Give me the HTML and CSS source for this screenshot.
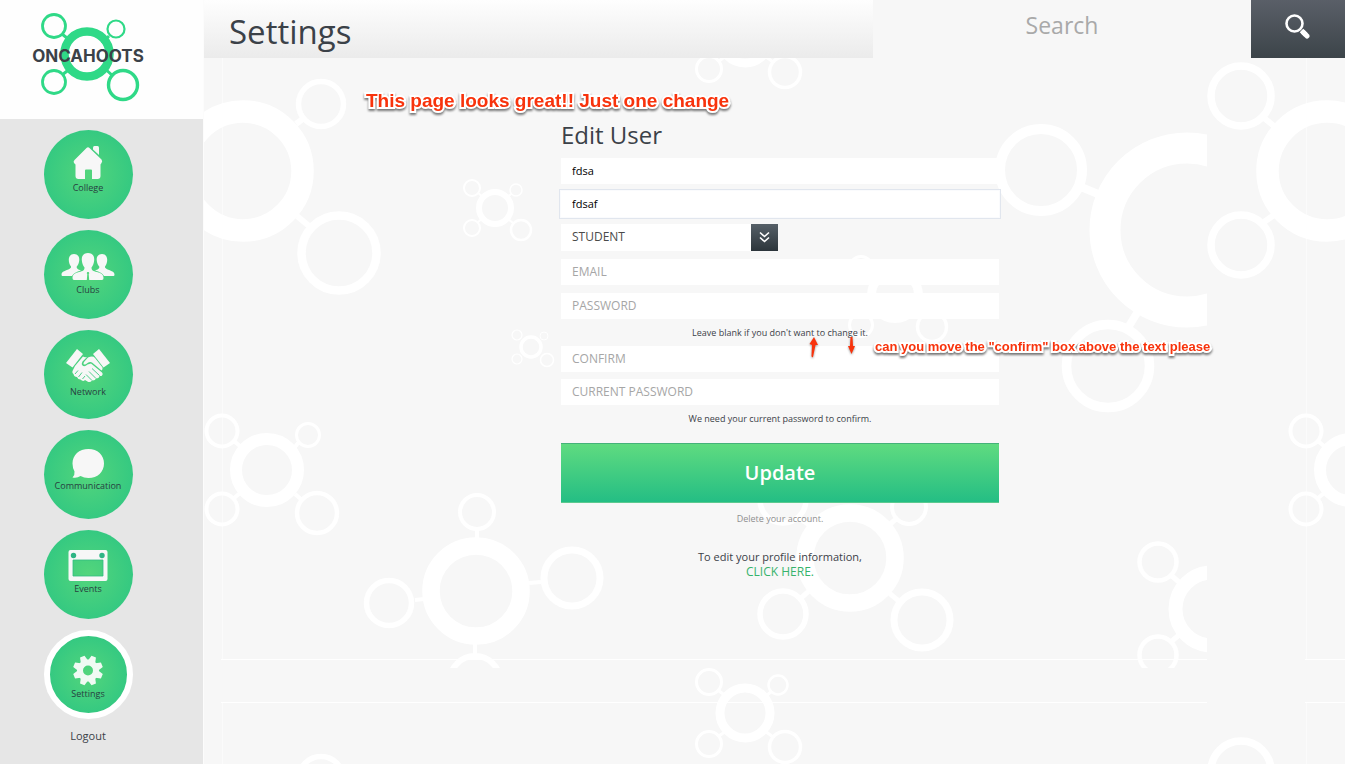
FILE: index.html
```html
<!DOCTYPE html>
<html lang="en">
<head>
<meta charset="utf-8">
<title>Oncahoots - Settings</title>
<link rel="stylesheet" href="styles.css">
</head>
<body>
<aside class="sidebar">
  <a class="logo" href="#">
    <svg width="116" height="92" viewBox="30 11 116 92" role="img" aria-label="Oncahoots">
      <g fill="none" stroke="#2fd987">
        <path stroke-width="3" d="M62 34L72 42M109 36L102 43M62 75L71 68M103 67L113 76"/>
        <circle cx="87" cy="54" r="22.500" stroke-width="8.500"/>
        <circle cx="54" cy="26" r="11.500" stroke-width="2.800"/>
        <circle cx="116" cy="29" r="8.500" stroke-width="2.200"/>
        <circle cx="54" cy="82" r="11.500" stroke-width="2.800"/>
        <circle cx="123" cy="85" r="14.500" stroke-width="3.400"/>
      </g>
      <text class="logo-text" x="88" y="62" text-anchor="middle">ONCAHOOTS</text>
    </svg>
  </a>
  <nav class="nav">
    <a class="nav-item" href="#">
      <svg width="30" height="36" viewBox="0 0 30 36" fill="#f7f7f7"><path d="M20 1.500Q20 0 21.500 0H24.500Q26 0 26 1.500V9L20 3.500Z"/><path d="M13.500 2Q15 .5 16.500 2L28.500 13.500Q29.800 15 28.500 17L27.500 18.500V30Q27.500 33 24.500 33H19V24.500Q19 23.500 18 23.500H13Q12 23.500 12 24.500V33H5.500Q2.500 33 2.500 30V18.500L1 17Q0 15.500 1.500 14Z"/></svg>
      <span>College</span>
    </a>
    <a class="nav-item" href="#">
      <svg width="54" height="38" viewBox="0 0 54 38" fill="#f7f7f7">
        <path d="M13 8C16.500 8 18.500 10.500 18.300 14C18.100 17 17 19 15.500 21C16 23.500 18.500 24 20 24.500Q13 26 11 30H1.500Q.5 30 .5 28.500C.5 25 6.500 24.500 9 22.500Q10.500 21.500 10 20.500C8.500 18.500 7.700 16 7.800 13.500C7.900 10.500 9.500 8 13 8Z"/>
        <path d="M41 8C37.500 8 35.500 10.500 35.700 14C35.900 17 37 19 38.500 21C38 23.500 35.500 24 34 24.500Q41 26 43 30H52.500Q53.500 30 53.500 28.500C53.500 25 47.500 24.500 45 22.500Q43.500 21.500 44 20.500C45.500 18.500 46.300 16 46.200 13.500C46.100 10.500 44.500 8 41 8Z"/>
        <path d="M27 7C31 7 33.500 9.500 33.200 14C33 17 32 19.500 30.500 21.500C30.500 24.500 32 25 36 26C40 27 42.500 28.500 42.500 32Q42.500 34 41 34H28.200L27.700 28L28.300 27.300L27.700 26H26.300L25.700 27.300L26.300 28L25.800 34H13Q11.500 34 11.500 32C11.500 28.500 14 27 18 26C22 25 23.500 24.500 23.500 21.500C22 19.500 21 17 20.800 14C20.500 9.500 23 7 27 7Z"/>
      </svg>
      <span>Clubs</span>
    </a>
    <a class="nav-item" href="#">
      <svg width="46" height="40" viewBox="0 0 46 40" fill="#f7f7f7">
        <path d="M12 3L18 8L7.500 21.500L1 17Z"/><path d="M34 3L28 8L38.500 21.500L45 17Z"/>
        <path d="M18 10.500Q19.500 11.500 22 11L17.500 15.500Q16 18 17.500 19.500Q19.500 21.500 22.500 18.500L26 17.500L37 26.500Q38.500 28 37 29.500Q36 30.500 34.500 29.500Q34.500 32.500 31 32.500Q30 35 27 34.500Q25 37 22.500 35.500L20 34Q18 36 15.500 33.500Q13 33.500 12 31Q9 31 8.500 28Q6.500 26.500 8 24L10 20Z"/>
        <path d="M23 11.500Q28 9.500 30 12L37.500 21.500Q38 23.500 36.500 24.500L27 16.500Q25 15.500 22.500 17Q20.500 19 18.800 18.500Q18 17.500 19 16Z"/>
        <path d="M27 22.500L34.500 29.500M24 25.500L31 32.500M21 28.500L27 34.500M10 28L13 24.500M13.500 31L17 26.500M17.500 33L20 30" stroke="#3bcb80" stroke-width=".9" fill="none"/>
      </svg>
      <span>Network</span>
    </a>
    <a class="nav-item" href="#">
      <svg width="34" height="34" viewBox="0 0 34 34" fill="#f7f7f7"><path d="M17.500 3C26.500 3 33 9 33 17.500C33 26 26.500 32 17.500 32Q13 32 9.500 30Q6 32.500 1.500 31.500Q4 29 3.500 25.500Q1.500 22 1.500 17.500C1.500 9 8 3 17.500 3Z"/></svg>
      <span>Communication</span>
    </a>
    <a class="nav-item" href="#">
      <svg width="40" height="37" viewBox="0 0 40 37"><path fill="#f7f7f7" fill-rule="evenodd" d="M2.500 4H37.500Q39.500 4 39.500 6V33Q39.500 35 37.500 35H2.500Q.5 35 .5 33V6Q.5 4 2.500 4ZM5 14V30H35V14Z"/><path fill="none" stroke="#34bd80" stroke-width=".8" d="M5 14H35V30H5Z"/><circle cx="5.500" cy="9.500" r="2.700" fill="#2fb585"/><circle cx="34" cy="9.500" r="2.700" fill="#2fb585"/></svg>
      <span>Events</span>
    </a>
    <a class="nav-item nav-item--current" href="#" aria-current="page">
      <svg width="32" height="42" viewBox="0 0 32 42">
        <g transform="translate(16 24.500)">
          <circle r="8" fill="none" stroke="#f0faf3" stroke-width="6"/>
          <g fill="#f0faf3" transform="rotate(22.500)">
            <path id="teeth" d="M-3.800 -9.500L-2.400 -15H2.400L3.800 -9.500ZM-3.800 9.500L-2.400 15H2.400L3.800 9.500Z"/>
            <use href="#teeth" transform="rotate(45)"/><use href="#teeth" transform="rotate(90)"/><use href="#teeth" transform="rotate(135)"/>
          </g>
        </g>
      </svg>
      <span>Settings</span>
    </a>
    <a class="logout" href="#">Logout</a>
  </nav>
</aside>

<div class="main">
  <svg class="pattern" viewBox="204 0 1141 764" preserveAspectRatio="xMinYMin slice" aria-hidden="true">
    <defs>
      <clipPath id="tile"><path d="M204 0H1207V668H204Z"/></clipPath>
      <g id="trio">
        <path stroke-width="3" d="M719 691L726 696M772 691L766 696M719 736L726 731M765 731L773 737"/>
        <circle cx="745" cy="713" r="25" stroke-width="9"/>
        <circle cx="709" cy="682" r="12.500" stroke-width="3"/>
        <circle cx="778" cy="685" r="9.500" stroke-width="2.500"/>
        <circle cx="709" cy="744" r="12.500" stroke-width="3"/>
        <circle cx="785" cy="747" r="15.500" stroke-width="3.500"/>
      </g>
      <g id="medium">
        <path stroke-width="4" d="M234 441L241 447M299 442L294 448M233 499L240 493M295 494L303 501"/>
        <circle cx="267" cy="470" r="31" stroke-width="12"/>
        <circle cx="222" cy="431" r="15.500" stroke-width="4"/>
        <circle cx="308" cy="435" r="11.500" stroke-width="3"/>
        <circle cx="222" cy="509" r="15.500" stroke-width="4"/>
        <circle cx="317" cy="513" r="20" stroke-width="4.500"/>
      </g>
    </defs>
    <g fill="none" stroke="#fff">
      <path d="M221 659.500H1207M221 702.500H1207M1305 659.500H1345M1305 702.500H1345"/>
      <path stroke="#fbfbfb" d="M222.500 58V659M222.500 703V764M1306.500 58V659M1306.500 703V764"/>
      <path stroke-width="6" d="M296 124L304 118M297 216L309 226"/>
      <circle cx="243" cy="171" r="59.500" stroke-width="22.500"/>
      <circle cx="321" cy="104" r="22.500" stroke-width="5.500"/>
      <circle cx="321" cy="779" r="22.500" stroke-width="5.500"/>
      <circle cx="339" cy="253" r="37.500" stroke-width="8.500"/>

      <path stroke-width="2" d="M478 193L483 197M511 194L507 198M478 222L483 218M507 218L513 223"/>
      <circle cx="495" cy="208" r="16" stroke-width="6"/>
      <circle cx="472" cy="188" r="8" stroke-width="2"/>
      <circle cx="516" cy="190" r="6" stroke-width="1.500"/>
      <circle cx="472" cy="228" r="8" stroke-width="2"/>
      <circle cx="521" cy="230" r="10" stroke-width="2.500"/>

      <circle cx="531" cy="347" r="10" stroke-width="3.500"/>
      <circle cx="517" cy="335" r="5" stroke-width="1.200"/>
      <circle cx="544" cy="336" r="4" stroke-width="1"/>
      <circle cx="517" cy="359" r="5" stroke-width="1.200"/>
      <circle cx="547" cy="360" r="6.500" stroke-width="1.500"/>

      <use href="#medium"/><use href="#medium" x="1084"/>
      <use href="#trio"/><use href="#trio" y="-675"/>

      <g clip-path="url(#tile)">
        <path stroke-width="4" d="M477 530V540M415 600L424 599M529 583L541 582M475 644V655"/>
        <circle cx="476" cy="591" r="45" stroke-width="17.500"/>
        <circle cx="477" cy="512" r="17" stroke-width="4"/>
        <circle cx="389" cy="603" r="22.500" stroke-width="5.500"/>
        <circle cx="572" cy="578" r="28" stroke-width="7"/>
        <circle cx="475" cy="681" r="25" stroke-width="6"/>
        <path stroke-width="8" d="M1081 187L1098 194M1137 313L1129 326"/>
        <circle cx="1041" cy="170" r="41" stroke-width="10"/>
        <circle cx="1187" cy="230" r="82" stroke-width="31"/>
        <circle cx="1108" cy="366" r="41.500" stroke-width="9.500"/>
        <path stroke-width="5" d="M1172 576L1180 583M1172 641L1179 635"/>
        <circle cx="1158" cy="562" r="18.500" stroke-width="4.500"/>
        <circle cx="1212" cy="609" r="36.500" stroke-width="14"/>
        <circle cx="1158" cy="655" r="18.500" stroke-width="4.500"/>
      </g>

      <circle cx="895" cy="295" r="23.500" stroke-width="9"/>
      <circle cx="861" cy="268" r="11.500" stroke-width="3"/>
      <circle cx="861" cy="325" r="11.500" stroke-width="3"/>
      <circle cx="932" cy="327" r="14.500" stroke-width="3.500"/>

      <path stroke-width="5" d="M800 519L811 526M896 519L888 526M801 598L809 591M888 592L901 603"/>
      <circle cx="850" cy="558" r="45" stroke-width="17.500"/>
      <circle cx="783" cy="500" r="23" stroke-width="5.500"/>
      <circle cx="909" cy="507" r="17" stroke-width="4"/>
      <circle cx="783" cy="614" r="23" stroke-width="5.500"/>
      <circle cx="922" cy="620" r="28" stroke-width="7"/>

      <path stroke-width="6" d="M1264 118L1274 126M1264 222L1274 215"/>
      <circle cx="1327" cy="171" r="59.500" stroke-width="22.500"/>
      <circle cx="1241" cy="96" r="30" stroke-width="7.500"/>
      <circle cx="1241" cy="245" r="30" stroke-width="7.500"/>
      <circle cx="1241" cy="771" r="30" stroke-width="7.500"/>
    </g>
  </svg>

  <header class="topbar">
    <h1 class="topbar-title">Settings</h1>
    <input class="topbar-search" type="search" placeholder="Search" aria-label="Search">
    <button class="topbar-button" type="button" aria-label="Search">
      <svg width="26" height="25" viewBox="0 0 26 25" fill="none" stroke="#fff"><circle cx="9.500" cy="9.500" r="8" stroke-width="2.600"/><path stroke-width="5" d="M16.500 16.500L21 21"/><path stroke-width="5" stroke-linecap="round" d="M18.500 18.500L22 22"/></svg>
    </button>
  </header>

  <main class="content">
    <form class="form">
      <h2 class="form-title">Edit User</h2>
      <input class="field" type="text" value="fdsa" aria-label="First name">
      <input class="field field--active" type="text" value="fdsaf" aria-label="Last name">
      <div class="picker">
        <select class="picker-select" aria-label="User type"><option>STUDENT</option><option>ALUMNI</option></select>
        <svg class="picker-arrow" width="27" height="27" viewBox="0 0 27 27" fill="none" stroke="#fff" stroke-width="1.600" aria-hidden="true"><path d="M9 8.500L13.500 12.500L18 8.500M9 13.500L13.500 17.500L18 13.500"/></svg>
      </div>
      <input class="field" type="email" placeholder="EMAIL" aria-label="Email">
      <input class="field" type="password" placeholder="PASSWORD" aria-label="Password">
      <p class="hint">Leave blank if you don't want to change it.</p>
      <input class="field" type="password" placeholder="CONFIRM" aria-label="Confirm password">
      <input class="field" type="password" placeholder="CURRENT PASSWORD" aria-label="Current password">
      <p class="hint">We need your current password to confirm.</p>
      <button class="submit" type="submit">Update</button>
      <a class="delete" href="#">Delete your account.</a>
      <p class="profile">To edit your profile information,<br><a class="profile-link" href="#">CLICK HERE.</a></p>
    </form>
  </main>

  <p class="note note--page">This page looks great!! Just one change</p>
  <p class="note note--confirm">can you move the "confirm" box above the text please</p>
  <svg class="arrows" width="52" height="26" viewBox="806 334 52 26" fill="#f8330c" aria-hidden="true">
    <path d="M814 337L818 345L815.500 345L813 357Q812 358 811.500 356L812 345L809.500 344Z"/>
    <path d="M850.500 337H852.500L853 346H855L851.500 354L848 346H850Z"/>
  </svg>
</div>
</body>
</html>
```

FILE: styles.css
```css
* {
  box-sizing: border-box;
}

body {
  margin: 0;
  min-height: 100vh;
  display: flex;
  background: #f7f7f7;
  color: #3b4148;
  font-family: "Open Sans", "Noto Sans", sans-serif;
}

a {
  color: inherit;
  text-decoration: none;
}

input,
select,
button {
  margin: 0;
  border: 0;
  border-radius: 0;
  font-family: inherit;
}

/* Sidebar */
.sidebar {
  flex: none;
  width: 204px;
  background: #e6e6e6;
  border-right: 1px solid #fcfcfc;
}

.logo {
  display: flex;
  height: 119px;
  padding: 11px 30px;
  background: #fefefe;
}

.logo-text {
  fill: #3b4148;
  font-family: Inter, sans-serif;
  font-size: 17px;
  font-weight: 700;
}

.nav {
  display: flex;
  flex-direction: column;
  align-items: center;
  gap: 11px;
  width: 176px;
  padding-top: 11px;
}

.nav-item {
  display: flex;
  flex-direction: column;
  align-items: center;
  width: 89px;
  height: 89px;
  padding-top: 16px;
  border-radius: 50%;
  background: radial-gradient(circle closest-side, #53d57c, #35c981);
  color: #27403f;
  font-size: 9px;
  line-height: 12px;
}

.nav-item--current {
  padding-top: 10px;
  border: 6px solid #fff;
}

.logout {
  font-size: 11px;
  font-weight: 500;
  line-height: 12px;
}

/* Top bar */
.main {
  position: relative;
  flex: 1;
  min-width: 0;
  overflow: hidden;
}

.pattern {
  position: absolute;
  inset: 0;
  width: 100%;
  height: 100%;
}

.topbar {
  position: relative;
  display: grid;
  grid-template-columns: 669fr 378fr 94fr;
  height: 58px;
}

.topbar-title {
  margin: 0;
  padding: 10px 25px 0;
  background: linear-gradient(#fefefe, #ebebeb);
  font-size: 33px;
  font-weight: 500;
  line-height: 44px;
}

.topbar-search {
  min-width: 0;
  padding: 0 0 8px;
  appearance: none;
  background: #f7f7f7;
  font-size: 23px;
  font-weight: 500;
  text-align: center;
  outline: 0;
}

.topbar-search::-webkit-search-cancel-button {
  display: none;
}

.topbar-search::placeholder {
  color: #a9a9a9;
  opacity: 1;
}

.topbar-button {
  padding: 0 0 6px;
  background: linear-gradient(#5a5f68, #3c4449);
  line-height: 0;
}

/* Form */
.content {
  position: relative;
  display: flex;
  justify-content: center;
  padding: 61px 0 24px 11px;
}

.form {
  display: flex;
  flex-direction: column;
  gap: 7px;
  width: 438px;
}

.form-title {
  margin: 0;
  font-size: 24px;
  font-weight: 500;
  line-height: 32px;
}

.field {
  width: 100%;
  height: 26px;
  padding: 0 11px 2px;
  background: #fff;
  color: #000;
  font-size: 11px;
  font-weight: 500;
}

.field::placeholder {
  color: #a6a6a6;
  font-size: 12px;
  opacity: 1;
}

.field[type="email"] {
  margin-bottom: 1px;
}

.field--active {
  outline: 1px solid #e1e6ee;
  outline-offset: 1px;
  box-shadow: 0 0 0 1px #fafbfd;
}

.picker {
  position: relative;
  width: 217px;
  height: 27px;
  margin-bottom: 1px;
}

.picker-select {
  display: block;
  width: 100%;
  height: 27px;
  padding: 0 38px 2px 11px;
  appearance: none;
  background: #fff;
  color: #4a4a4a;
  font-size: 12px;
}

.picker-arrow {
  position: absolute;
  top: 0;
  right: 0;
  background: linear-gradient(#566068, #2c353b);
  pointer-events: none;
}

.hint {
  margin: 0;
  font-size: 9px;
  line-height: 13px;
  text-align: center;
}

.submit {
  height: 60px;
  margin-top: 11px;
  padding: 0 0 2px;
  border-top: 1px solid #45b279;
  border-bottom: 1px solid #5cc98f;
  background: linear-gradient(#5fdb80, #24be84);
  color: #fff;
  font-size: 20px;
  font-weight: 600;
}

.delete {
  align-self: center;
  margin-top: 3px;
  color: #8f8f8f;
  font-size: 9px;
  line-height: 12px;
}

.profile {
  margin: 17px 0 0;
  font-size: 11px;
  font-weight: 500;
  line-height: 15px;
  text-align: center;
}

.profile-link {
  color: #36b36b;
  font-size: 12px;
  font-weight: 400;
}

/* Review notes laid over the page */
.note {
  position: absolute;
  margin: 0;
  color: #f8330c;
  font-family: "Liberation Sans", Arial, sans-serif;
  font-weight: 700;
  white-space: nowrap;
  -webkit-text-stroke: 4px #fff;
  paint-order: stroke fill;
  filter: drop-shadow(0 2px 1px #777);
}

.note--page {
  top: 89px;
  left: 162px;
  font-size: 19px;
  line-height: 24px;
}

.note--confirm {
  top: 338px;
  left: 671px;
  font-size: 13px;
  line-height: 18px;
}

.arrows {
  position: absolute;
  top: 334px;
  left: 602px;
  filter: drop-shadow(0 1px 1px #999);
}
```
